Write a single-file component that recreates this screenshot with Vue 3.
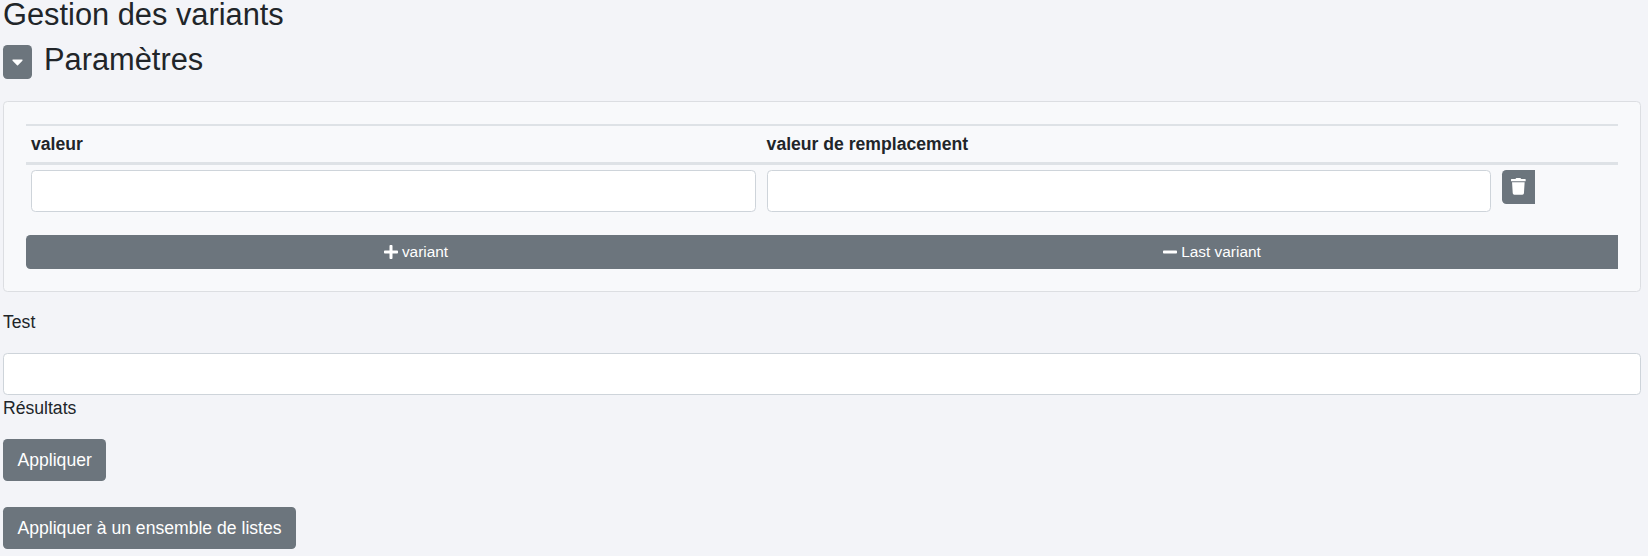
<template>
  <div class="page">
    <h1 class="page-title">Gestion des variants</h1>
    <div class="section-head">
      <button class="btn toggle" type="button" aria-label="Replier">
        <svg viewBox="0 0 320 512" width="11" height="17.6"><path fill="#fff" d="M31.3 192h257.3c17.8 0 26.7 21.5 14.1 34.1L174.1 354.8c-7.8 7.8-20.5 7.8-28.3 0L17.2 226.1C4.6 213.5 13.5 192 31.3 192z" /></svg>
      </button>
      <h2>Paramètres</h2>
    </div>

    <section class="card">
      <div class="variants-table">
        <div class="table-row table-head">
          <div v-for="col in columns" :key="col" class="th">{{ col }}</div>
        </div>
        <div class="table-row table-body">
          <div class="td"><input type="text" class="field" /></div>
          <div class="td second"><input type="text" class="field" /></div>
          <div class="td">
            <button class="btn trash" type="button" aria-label="Supprimer">
              <svg viewBox="0 0 448 512" width="14.7" height="16.8"><path fill="#fff" d="M432 32H312l-9.4-18.7A24 24 0 0 0 281.1 0H166.8a23.72 23.72 0 0 0-21.4 13.3L136 32H16A16 16 0 0 0 0 48v32a16 16 0 0 0 16 16h416a16 16 0 0 0 16-16V48a16 16 0 0 0-16-16zM53.2 467a48 48 0 0 0 47.9 45h245.8a48 48 0 0 0 47.9-45L416 128H32z" /></svg>
            </button>
          </div>
        </div>
      </div>
      <div class="bar">
        <button class="btn bar-btn" type="button">
          <svg viewBox="0 0 448 512" width="14" height="16"><path fill="#fff" d="M416 208H272V64c0-17.67-14.33-32-32-32h-32c-17.67 0-32 14.33-32 32v144H32c-17.67 0-32 14.33-32 32v32c0 17.67 14.33 32 32 32h144v144c0 17.67 14.33 32 32 32h32c17.67 0 32-14.33 32-32V304h144c17.67 0 32-14.33 32-32v-32c0-17.67-14.33-32-32-32z" /></svg>
          <span>variant</span>
        </button>
        <button class="btn bar-btn" type="button">
          <svg viewBox="0 0 448 512" width="14" height="16"><path fill="#fff" d="M416 208H32c-17.67 0-32 14.33-32 32v32c0 17.67 14.33 32 32 32h384c17.67 0 32-14.33 32-32v-32c0-17.67-14.33-32-32-32z" /></svg>
          <span>Last variant</span>
        </button>
      </div>
    </section>

    <label class="test-label" for="test">Test</label>
    <input id="test" type="text" class="field" />
    <div class="result-label">Résultats</div>

    <button class="btn action" type="button">Appliquer</button>
    <button class="btn action" type="button">Appliquer à un ensemble de listes</button>
  </div>
</template>

<script setup>
const columns = ['valeur', 'valeur de remplacement', '']
</script>

<style>
html,
body {
  margin: 0;
  background: #f3f4f8;
}
</style>

<style scoped>
.page {
  display: flex;
  flex-direction: column;
  align-items: flex-start;
  padding: 1px 7px 0 3px;
  color: #212529;
  font-family: "Liberation Sans", Arial, sans-serif;
  font-size: 17.6px;
  line-height: 24px;
}

.page-title {
  margin: 0;
  font-size: 30.8px;
  font-weight: 400;
  line-height: 28px;
}

.section-head {
  display: flex;
  align-items: center;
  gap: 12px;
  margin-top: 16px;
}

.section-head h2 {
  margin: -5px 0 0;
  font-size: 30.8px;
  font-weight: 400;
  line-height: 36px;
}

.btn {
  border: 0;
  border-radius: 4.4px;
  background: #6c757d;
  color: #fff;
  font-family: inherit;
  font-size: 17.6px;
  line-height: 24px;
}

.toggle {
  display: flex;
  align-items: center;
  justify-content: center;
  width: 29px;
  height: 34px;
  padding: 0;
}

.card {
  align-self: stretch;
  box-sizing: border-box;
  height: 191px;
  margin-top: 22px;
  padding: 22px 22px 0;
  background: #f8f9fb;
  border: 1px solid #dcdee2;
  border-radius: 4.4px;
}

.table-row {
  display: grid;
  grid-template-columns: 735px 736px 1fr;
}

.table-head {
  height: 36px;
  border-top: 2px solid #dee2e6;
  border-bottom: 3px solid #dee2e6;
}

.th {
  padding: 0 5px;
  font-weight: 700;
  line-height: 36px;
}

.th:nth-child(2) {
  padding-left: 5.6px;
}

.table-body {
  height: 70px;
}

.td {
  padding: 5px 5px 0;
}

.second {
  padding: 5px 6px 0;
}

.field {
  display: block;
  box-sizing: border-box;
  width: 100%;
  height: 42px;
  padding: 6px 12px;
  background: #fff;
  border: 1px solid #ced4da;
  border-radius: 4.4px;
  font-size: 17.6px;
}

.trash {
  display: flex;
  align-items: center;
  justify-content: center;
  width: 33px;
  height: 34px;
  padding: 0 0 1px;
  border-radius: 4.4px 0 0 4.4px;
}

.bar {
  display: grid;
  grid-template-columns: 780px 1fr;
}

.bar-btn {
  display: flex;
  align-items: center;
  justify-content: center;
  gap: 4px;
  height: 34px;
  padding: 0;
  border-radius: 0;
  font-size: 15.4px;
}

.bar-btn:first-child {
  border-radius: 4.4px 0 0 4.4px;
}

.test-label {
  margin-top: 18px;
}

#test {
  margin-top: 19px;
}

.result-label {
  margin-top: 1px;
}

.action {
  height: 42px;
  margin-top: 19px;
  padding: 0 14.5px;
}

.action:last-child {
  margin-top: 26px;
}
</style>
